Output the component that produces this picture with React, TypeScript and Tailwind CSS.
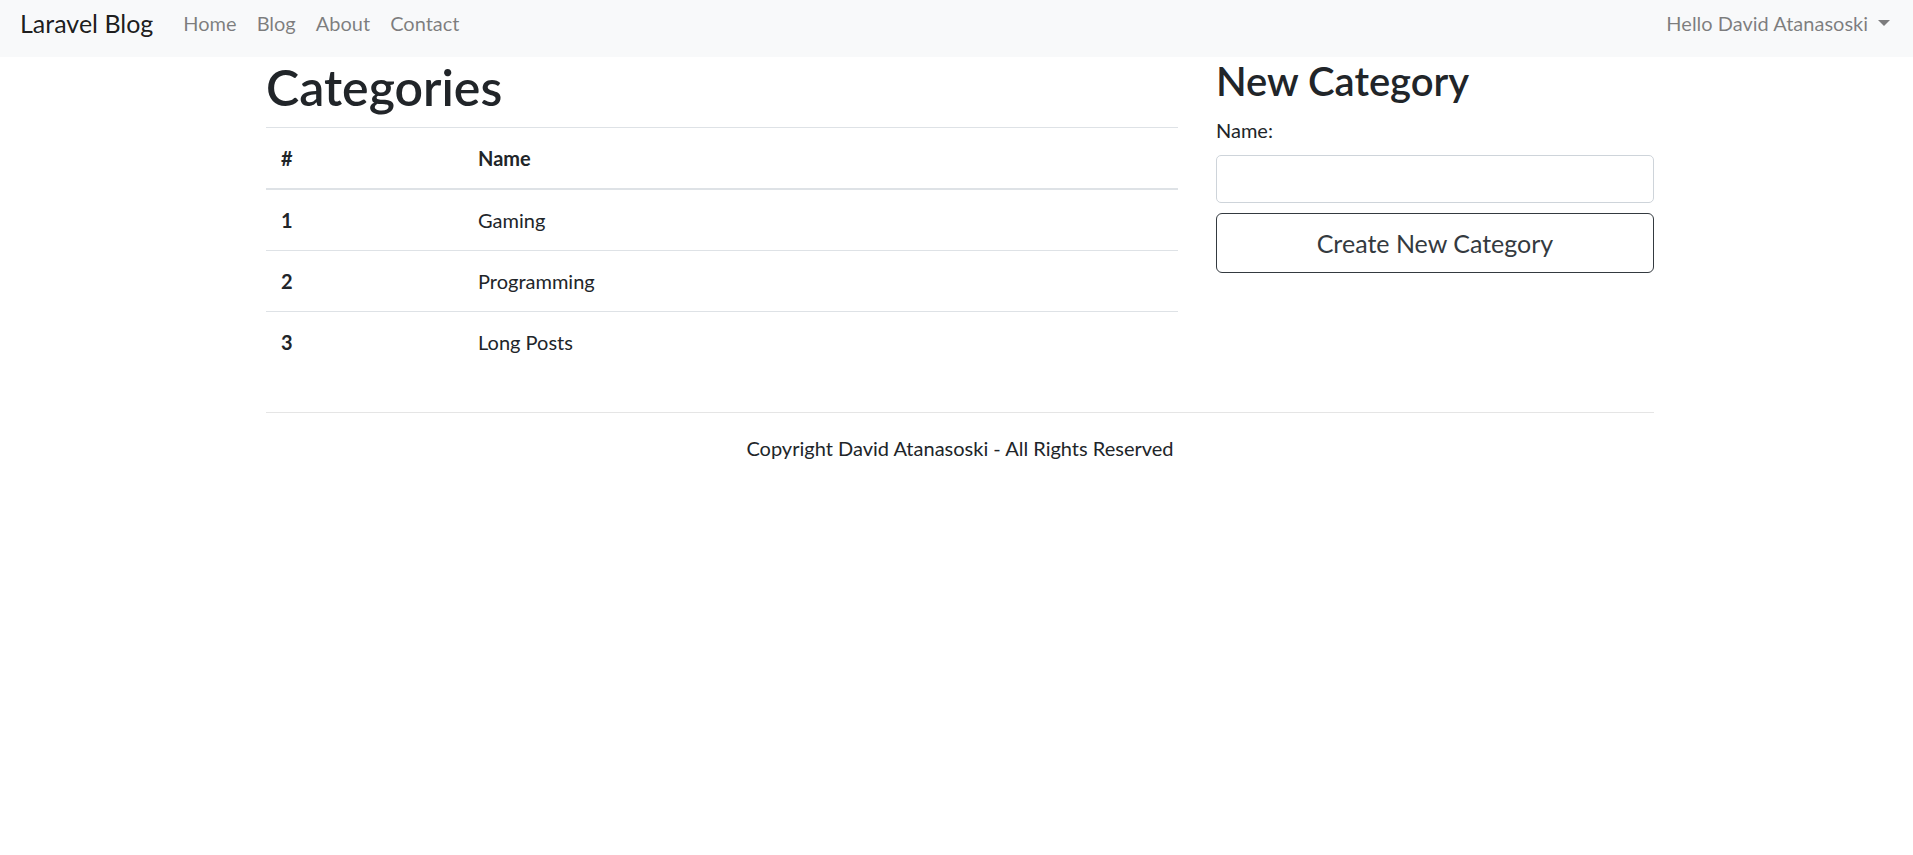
import React from "react";

const rows = [
  { id: 1, name: "Gaming" },
  { id: 2, name: "Programming" },
  { id: 3, name: "Long Posts" },
];

export default function App() {
  return (
    <div className="min-h-screen bg-white text-[#212529] text-[20px] leading-[30px]" style={{ fontFamily: 'Lato, "Noto Sans", sans-serif' }}>
      <nav className="h-[57px] bg-[#f8f9fa] flex items-start pt-[8px] pl-[20px] pr-[23px]">
        <a className="text-[25px] leading-[30px] text-[rgba(0,0,0,0.9)] mr-[20px]">Laravel Blog</a>
        <ul className="flex items-start">
          {["Home", "Blog", "About", "Contact"].map((l) => (
            <li key={l} className="px-[10px] text-[rgba(0,0,0,0.5)]">{l}</li>
          ))}
        </ul>
        <div className="ml-auto flex items-center h-[30px] text-[rgba(0,0,0,0.5)]">
          <span>Hello David Atanasoski</span>
          <span className="ml-[10px] w-0 h-0 border-t-[6px] border-t-[rgba(0,0,0,0.5)] border-x-[6px] border-x-transparent"></span>
        </div>
      </nav>
      <main className="w-[1388px] ml-[266px]">
        <div className="flex gap-[38px]">
          <div className="w-[912px]">
            <h1 className="text-[50px] leading-[60px] font-semibold mb-[10px]">Categories</h1>
            <table className="w-full border-collapse mb-[20px]">
              <thead>
                <tr>
                  <th className="w-[197px] text-left font-bold p-[15px] border-t border-[#dee2e6] border-b-2">#</th>
                  <th className="text-left font-bold p-[15px] border-t border-[#dee2e6] border-b-2">Name</th>
                </tr>
              </thead>
              <tbody>
                {rows.map((r, i) => (
                  <tr key={r.id}>
                    <th className={`text-left font-bold p-[15px] border-[#dee2e6] ${i > 0 ? "border-t" : ""}`}>{r.id}</th>
                    <td className={`p-[15px] border-[#dee2e6] ${i > 0 ? "border-t" : ""}`}>{r.name}</td>
                  </tr>
                ))}
              </tbody>
            </table>
          </div>
          <div className="w-[438px]">
            <h2 className="text-[40px] leading-[48px] font-semibold mb-[10px]">New Category</h2>
            <label className="block mb-[10px]">Name:</label>
            <input className="block w-full h-[48px] border border-[#ced4da] rounded-[5px] px-[15px] mb-[10px]" />
            <button className="block w-full h-[60px] border border-[#343a40] rounded-[6px] text-[25px] text-[#343a40]">Create New Category</button>
          </div>
        </div>
        <hr className="mt-[20px] mb-[20px] border-t border-[rgba(0,0,0,0.1)]" />
        <p className="text-center">Copyright David Atanasoski - All Rights Reserved</p>
      </main>
    </div>
  );
}
